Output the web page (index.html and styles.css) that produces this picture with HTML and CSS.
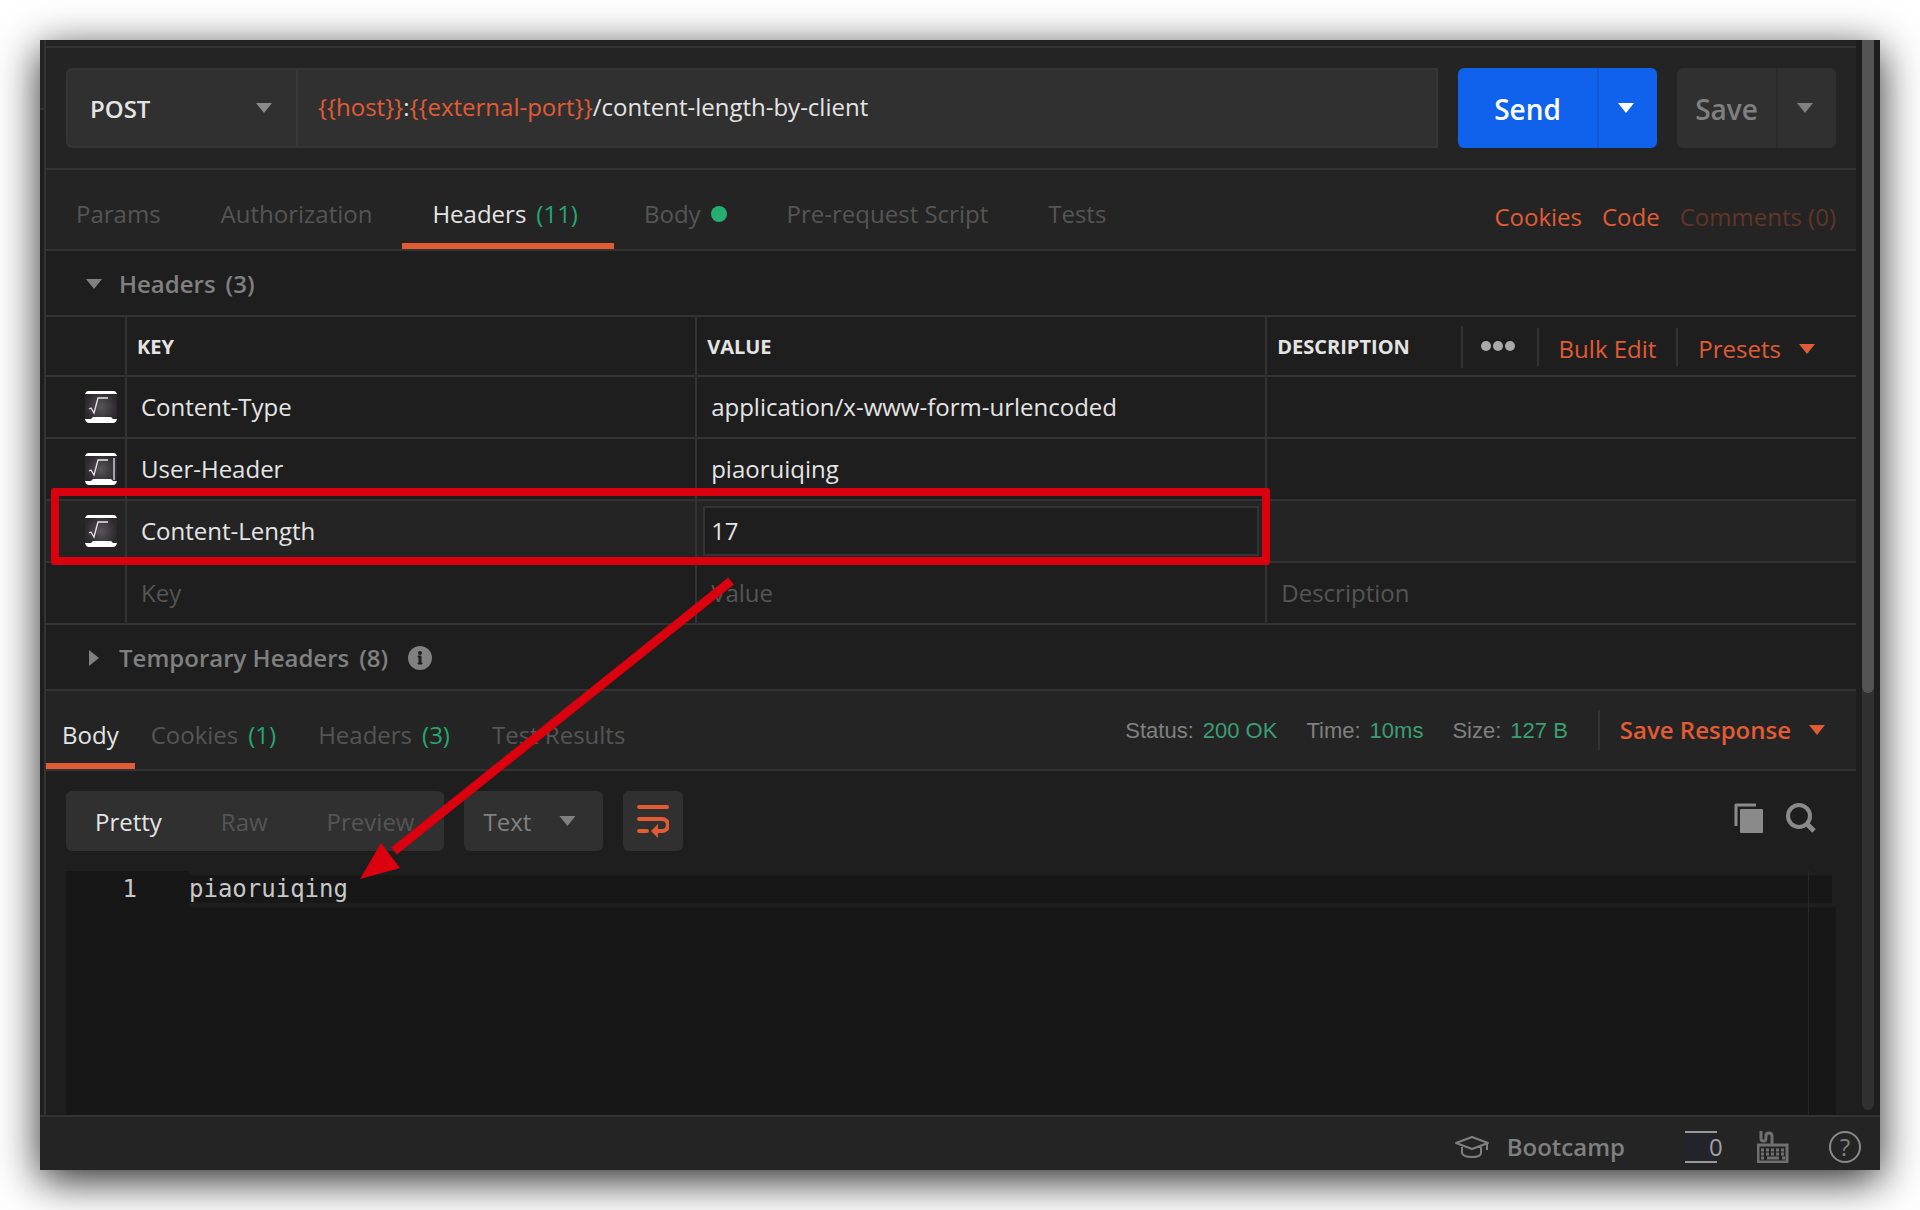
FILE: index.html
```
<!DOCTYPE html>
<html lang="en">
<head>
    <meta charset="UTF-8">
    <meta name="viewport" content="width=device-width, initial-scale=1.0">
    <title>content-length-by-client</title>
    <link rel="stylesheet" href="styles.css">
</head>
<body>
    <div class="app">
        <div class="workspace">
            <div class="sidebar-edge"></div>
            <main class="content">
                <form class="request-bar">
                    <div class="url-group">
                        <div class="method">
                            <select aria-label="Method">
                                <option>POST</option>
                                <option>GET</option>
                            </select>
                            <span class="caret"></span>
                        </div>
                        <div class="url" role="textbox" aria-label="Request URL" contenteditable="true" spellcheck="false"><span class="var">{{host}}</span>:<span class="var">{{external-port}}</span>/content-length-by-client</div>
                    </div>
                    <div class="split send">
                        <button type="button" class="main">Send</button>
                        <button type="button" class="more" aria-label="Send options"><span class="caret"></span></button>
                    </div>
                    <div class="split save">
                        <button type="button" class="main">Save</button>
                        <button type="button" class="more" aria-label="Save options"><span class="caret"></span></button>
                    </div>
                </form>

                <div class="request-tabs">
                    <nav class="tabs">
                        <button class="tab">Params</button>
                        <button class="tab">Authorization</button>
                        <button class="tab active">Headers <span class="count">(11)</span></button>
                        <button class="tab">Body <span class="dot"></span></button>
                        <button class="tab">Pre-request Script</button>
                        <button class="tab">Tests</button>
                    </nav>
                    <div class="request-links">
                        <a href="#">Cookies</a>
                        <a href="#">Code</a>
                        <a href="#" class="disabled">Comments (0)</a>
                    </div>
                </div>

                <button class="section-title">
                    <span class="caret"></span>
                    <span class="label">Headers <span>(3)</span></span>
                </button>

                <div class="table-wrap">
                    <table class="headers-table">
                        <colgroup>
                            <col class="col-check">
                            <col class="col-key">
                            <col class="col-value">
                            <col>
                        </colgroup>
                        <thead>
                            <tr>
                                <th></th>
                                <th>KEY</th>
                                <th>VALUE</th>
                                <th>
                                    <div class="th-tools">
                                        <span class="th-label">DESCRIPTION</span>
                                        <button class="dots" aria-label="Columns"><i></i><i></i><i></i></button>
                                        <button class="link bulk">Bulk Edit</button>
                                        <button class="link presets">Presets <span class="caret"></span></button>
                                    </div>
                                </th>
                            </tr>
                        </thead>
                        <tbody>
                            <tr>
                                <td class="check">
                                    <label>
                                        <input type="checkbox" checked aria-label="Enable Content-Type">
                                        <svg viewBox="0 0 32 32"><use href="#check"/></svg>
                                    </label>
                                </td>
                                <td><input type="text" aria-label="Key" value="Content-Type"></td>
                                <td><input type="text" aria-label="Value" value="application/x-www-form-urlencoded"></td>
                                <td></td>
                            </tr>
                            <tr>
                                <td class="check">
                                    <label>
                                        <input type="checkbox" checked aria-label="Enable User-Header">
                                        <svg viewBox="0 0 32 32"><use href="#check"/><path d="M29 5V27" stroke="#a8a2a9" stroke-width="2"/></svg>
                                    </label>
                                </td>
                                <td><input type="text" aria-label="Key" value="User-Header"></td>
                                <td><input type="text" aria-label="Value" value="piaoruiqing"></td>
                                <td></td>
                            </tr>
                            <tr class="selected">
                                <td class="check">
                                    <label>
                                        <input type="checkbox" checked aria-label="Enable Content-Length">
                                        <svg viewBox="0 0 32 32"><use href="#check"/></svg>
                                    </label>
                                </td>
                                <td><input type="text" aria-label="Key" value="Content-Length"></td>
                                <td><input type="text" class="focused" aria-label="Value" value="17"></td>
                                <td></td>
                            </tr>
                            <tr>
                                <td></td>
                                <td><input type="text" aria-label="Key" placeholder="Key"></td>
                                <td><input type="text" aria-label="Value" placeholder="Value"></td>
                                <td><input type="text" aria-label="Description" placeholder="Description"></td>
                            </tr>
                        </tbody>
                    </table>
                    <div class="mark-box"></div>
                    <svg class="mark-arrow" viewBox="0 0 380 310">
                        <path d="M375 9L38 279" stroke="#db000d" stroke-width="9" fill="none"/>
                        <path d="M4 307L25 271L44 296Z" fill="#db000d"/>
                    </svg>
                </div>

                <button class="section-title">
                    <span class="caret right"></span>
                    <span class="label">Temporary Headers <span>(8)</span></span>
                    <svg class="info" viewBox="0 0 24 24">
                        <circle cx="12" cy="12" r="12" fill="#808080"/>
                        <circle cx="12" cy="7" r="2" fill="#1e1e1e"/>
                        <path d="M10 10H13V17H14V18H10V17H11V11H10Z" fill="#1e1e1e" stroke="#1e1e1e"/>
                    </svg>
                </button>

                <div class="response-tabs">
                    <nav class="tabs">
                        <button class="tab active">Body</button>
                        <button class="tab">Cookies <span class="count">(1)</span></button>
                        <button class="tab">Headers <span class="count">(3)</span></button>
                        <button class="tab">Test Results</button>
                    </nav>
                    <div class="stats">
                        <span>Status: <b>200 OK</b></span>
                        <span>Time: <b>10ms</b></span>
                        <span>Size: <b>127 B</b></span>
                    </div>
                    <button class="link save-response">Save Response <span class="caret"></span></button>
                </div>

                <div class="toolbar">
                    <div class="view-modes">
                        <button class="active">Pretty</button>
                        <button>Raw</button>
                        <button>Preview</button>
                    </div>
                    <div class="format">
                        <select aria-label="Format">
                            <option>Text</option>
                            <option>JSON</option>
                        </select>
                        <span class="caret"></span>
                    </div>
                    <button class="wrap" aria-label="Wrap lines">
                        <svg viewBox="0 0 32 34" fill="none" stroke="#e15b35" stroke-width="4" stroke-linecap="round">
                            <path d="M2 3H30M2 15H25A6 6 0 0 1 25 27H21M2 27H10"/>
                            <path d="M14 27L21 20V34Z" fill="#e15b35" stroke="none"/>
                        </svg>
                    </button>
                    <div class="toolbar-icons">
                        <button aria-label="Copy">
                            <svg viewBox="0 0 30 30">
                                <path d="M2 23V2H22" fill="none" stroke="#8a8a8a" stroke-width="3" stroke-linejoin="round"/>
                                <rect x="6" y="6" width="23" height="24" rx="1" fill="#8a8a8a"/>
                            </svg>
                        </button>
                        <button aria-label="Search">
                            <svg viewBox="0 0 30 30" fill="none" stroke="#8a8a8a" stroke-width="4">
                                <circle cx="13" cy="13" r="11"/>
                                <path d="M21 21L28 28" stroke-width="5"/>
                            </svg>
                        </button>
                    </div>
                </div>

                <div class="editor">
                    <div class="gutter">1</div>
                    <div class="code"><div class="line">piaoruiqing</div></div>
                    <div class="ruler"></div>
                </div>
            </main>
            <div class="scroll">
                <div class="track"><div class="thumb"></div></div>
            </div>
        </div>

        <footer class="status-bar">
            <button class="bootcamp">
                <svg viewBox="0 0 34 22" fill="none" stroke="#808080" stroke-width="2" stroke-linejoin="round">
                    <path d="M1 7L17 1L33 7L17 13ZM7 9V17Q8 21 17 21Q26 21 26 17V9M32 7V14"/>
                </svg>
                Bootcamp
            </button>
            <button class="counter">0</button>
            <button aria-label="Shortcuts">
                <svg viewBox="0 0 32 32" fill="none" stroke="#707070">
                    <path d="M4 0V8Q4 10 7 10Q9 10 9 7V4Q9 2 12 2Q15 2 15 5V13" stroke-width="3"/>
                    <rect x="1" y="14" width="29" height="17" stroke-width="3"/>
                    <path d="M4 19H28M4 23H28" stroke-width="3" stroke-dasharray="3 2"/>
                    <path d="M4 27H7M10 27H22M25 27H28" stroke-width="3"/>
                </svg>
            </button>
            <button class="help" aria-label="Help">?</button>
        </footer>
    </div>

    <svg class="defs" width="0" height="0">
        <defs>
            <radialGradient id="glass">
                <stop offset="0" stop-color="#5a535b"/>
                <stop offset="1" stop-color="#2c292d"/>
            </radialGradient>
            <g id="check">
                <rect width="32" height="32" rx="3" fill="url(#glass)"/>
                <path d="M0 3Q1 0 3 0H29Q31 0 32 3Z" fill="#fff"/>
                <path d="M0 28H6L8 26H26L28 28H32Q31 32 28 32H4Q1 32 0 28Z" fill="#fff"/>
                <path d="M4 18L6 17L9 22L13 7H23" fill="none" stroke="#e8e4e8" stroke-width="1.3"/>
            </g>
        </defs>
    </svg>
</body>
</html>
```

FILE: styles.css
```
* {
    box-sizing: border-box;
}
body {
    margin: 0;
    padding: 40px;
    background: #fff;
    font-family: 'Open Sans', 'Noto Sans', sans-serif;
    font-size: 24px;
    line-height: 32px;
    color: #e4e4e4;
}
button, input, select {
    font: inherit;
    color: inherit;
    background: none;
    border: none;
    padding: 0;
    margin: 0;
    outline: none;
}
button {
    cursor: pointer;
}
select {
    appearance: none;
}
a {
    color: #e15b35;
    text-decoration: none;
}
svg {
    display: block;
}
.defs {
    position: absolute;
}
.app {
    position: relative;
    display: flex;
    flex-direction: column;
    min-height: calc(100vh - 80px);
    background: #1e1e1e;
    box-shadow: 0 10px 40px rgba(0, 0, 0, 0.85);
}
.workspace {
    flex: 1;
    display: flex;
}
.sidebar-edge {
    width: 6px;
    border-right: 2px solid #333;
}
.sidebar-edge::before {
    content: '';
    display: block;
    height: 68px;
    background: #242424;
    border-bottom: 2px solid #333;
}
.content {
    flex: 1;
    min-width: 0;
    display: flex;
    flex-direction: column;
    border-top: 6px solid #242424;
}
.caret {
    flex: none;
    display: inline-block;
    width: 16px;
    height: 10px;
    background: currentColor;
    clip-path: polygon(0 0, 100% 0, 50% 100%);
    pointer-events: none;
}
.caret.right {
    width: 10px;
    height: 16px;
    margin: 0 3px;
    clip-path: polygon(0 0, 100% 50%, 0 100%);
}
.link {
    color: #e15b35;
}

/* request line */
.request-bar {
    display: flex;
    gap: 20px;
    padding: 20px;
    background: #242424;
    border-top: 2px solid #333;
    border-bottom: 2px solid #333;
}
.url-group {
    flex: 1;
    display: flex;
    height: 80px;
    background: #303030;
    border: 2px solid #353535;
    border-radius: 6px 0 0 6px;
}
.method {
    display: flex;
    align-items: center;
    width: 230px;
    border-right: 2px solid #393939;
    color: #8a8a8a;
}
.method select {
    width: 100%;
    height: 100%;
    margin-right: -40px;
    padding: 2px 0 0 22px;
    font-weight: 600;
    color: #e4e4e4;
}
.url {
    flex: 1;
    padding: 21px 20px;
    outline: none;
}
.var {
    color: #e15b35;
}
.split {
    display: flex;
    height: 80px;
    border-radius: 6px;
    overflow: hidden;
    font-size: 28px;
    font-weight: 600;
}
.split .more {
    width: 60px;
    display: flex;
    align-items: center;
    justify-content: center;
    padding-right: 4px;
}
.send {
    width: 199px;
    background: #1062ec;
    color: #fff;
}
.split .main {
    flex: 1;
    padding-top: 2px;
}
.send .more {
    border-left: 2px solid #0e58d6;
}
.save {
    width: 159px;
    background: #303030;
    color: #808080;
}
.save .more {
    border-left: 2px solid #2a2a2a;
}

/* tabs */
.request-tabs {
    display: flex;
    justify-content: space-between;
    height: 81px;
    padding-right: 20px;
    background: #242424;
    border-bottom: 2px solid #333;
}
.tabs {
    display: flex;
}
.tab {
    display: flex;
    align-items: center;
    gap: 10px;
    padding: 15px 30px 0;
    color: #555;
    border-bottom: 6px solid transparent;
}
.tab.active {
    color: #e4e4e4;
    border-bottom-color: #e15b35;
}
.count {
    margin-right: 6px;
    color: #26a771;
}
.dot {
    width: 16px;
    height: 16px;
    border-radius: 50%;
    background: #26ad70;
}
.request-links {
    display: flex;
    align-items: center;
    gap: 20px;
    padding-top: 14px;
}
.request-links .disabled {
    color: #613528;
}
.section-title {
    display: flex;
    align-items: center;
    height: 66px;
    padding: 2px 0 0 40px;
    border-bottom: 2px solid #333;
    color: #808080;
    font-weight: 600;
}
.section-title .label {
    display: flex;
    gap: 10px;
    margin-left: 17px;
}
.info {
    width: 24px;
    height: 24px;
    margin-left: 20px;
}

/* headers table */
.table-wrap {
    position: relative;
}
.headers-table {
    width: 100%;
    table-layout: fixed;
    border-collapse: separate;
    border-spacing: 0;
}
.col-check {
    width: 81px;
}
.col-key, .col-value {
    width: 31.5%;
}
.headers-table th, .headers-table td {
    height: 62px;
    padding: 0 6px;
    border-bottom: 2px solid #333;
    border-right: 2px solid #333;
    text-align: left;
}
.headers-table th:last-child, .headers-table td:last-child {
    border-right: none;
}
.headers-table th {
    height: 60px;
    padding: 2px 10px 0;
    font-size: 20px;
    font-weight: 700;
}
.headers-table td input[type="text"] {
    display: block;
    width: 100%;
    height: 50px;
    padding: 0 6px 2px;
    border: 2px solid transparent;
}
.headers-table td input::placeholder {
    color: #555;
    opacity: 1;
}
.headers-table td input.focused {
    background: #1e1e1e;
    border-color: #333;
}
.selected {
    background: #242424;
}
.check label {
    position: relative;
    display: block;
    width: 32px;
    margin-left: 33px;
}
.check input {
    position: absolute;
    width: 32px;
    height: 32px;
    opacity: 0;
}
.th-tools {
    display: flex;
    align-items: center;
    padding-right: 31px;
}
.th-label {
    flex: 1;
}
.dots {
    display: flex;
    align-items: center;
    gap: 2px;
    height: 42px;
    padding: 0 22px 2px 18px;
    border-left: 2px solid #333;
}
.dots i {
    width: 10px;
    height: 10px;
    border-radius: 50%;
    background: #a8a8a8;
}
.th-tools .link {
    height: 38px;
    padding: 4px 0 0 20px;
    border-left: 2px solid #333;
    font-size: 24px;
    font-weight: 400;
}
.th-tools .bulk {
    padding-right: 20px;
}
.presets, .save-response {
    display: flex;
    align-items: center;
    gap: 18px;
}

/* callout over the edited row */
.mark-box {
    position: absolute;
    top: 171px;
    left: 5px;
    right: 586px;
    height: 77px;
    border: 8px solid #db000d;
    border-radius: 3px;
}
.mark-arrow {
    position: absolute;
    z-index: 1;
    top: 255px;
    left: 310px;
    width: 380px;
    height: 310px;
    pointer-events: none;
}

/* response */
.response-tabs {
    display: flex;
    align-items: center;
    height: 80px;
    padding-right: 31px;
    background: #242424;
    border-bottom: 2px solid #333;
}
.response-tabs .tabs {
    flex: 1;
    align-self: stretch;
}
.response-tabs .tab {
    padding: 16px 16px 0;
}
.response-tabs .count {
    margin-right: 10px;
}
.stats {
    display: flex;
    gap: 29px;
    padding-top: 2px;
    font-family: 'Liberation Sans', Arial, sans-serif;
    font-size: 22px;
    color: #808080;
}
.stats span {
    display: flex;
    gap: 9px;
}
.stats b {
    font-weight: 400;
    color: #3a9f73;
}
.save-response {
    height: 40px;
    margin-left: 30px;
    padding-left: 20px;
    border-left: 2px solid #333;
    font-weight: 600;
}
.toolbar {
    display: flex;
    gap: 20px;
    padding: 20px;
}
.view-modes, .format, .wrap {
    height: 60px;
    background: #303030;
    border-radius: 6px;
}
.view-modes {
    display: flex;
}
.view-modes button {
    padding: 2px 30px 0 29px;
    color: #555;
}
.view-modes .active {
    color: #e4e4e4;
}
.format {
    display: flex;
    align-items: center;
    width: 139px;
    color: #808080;
}
.format select {
    width: 100%;
    height: 100%;
    margin-right: -44px;
    padding: 2px 0 0 19px;
}
.wrap {
    width: 60px;
    padding: 0 14px;
}
.toolbar-icons {
    display: flex;
    align-items: center;
    gap: 22px;
    margin-left: auto;
    padding: 0 20px 6px 0;
}
.toolbar-icons svg {
    width: 30px;
    height: 30px;
}
.editor {
    flex: 1;
    display: flex;
    position: relative;
    min-height: 240px;
    margin: 0 20px;
    background: #171717;
    font-family: 'DejaVu Sans Mono', monospace;
    color: #c8c8c8;
}
.gutter {
    width: 123px;
    padding: 2px 52px 0 0;
    text-align: right;
}
.code {
    flex: 1;
}
.line {
    height: 36px;
    line-height: 28px;
    border: 4px solid #1e1e1e;
    border-left: none;
}
.ruler {
    position: absolute;
    top: 0;
    right: 0;
    bottom: 0;
    width: 28px;
    border-left: 1px solid #272727;
}
.scroll {
    display: flex;
    width: 24px;
    padding: 0 6px 5px;
}
.track {
    width: 12px;
    background: #303030;
    border-radius: 0 0 6px 6px;
}
.thumb {
    height: 61%;
    background: #545454;
    border-radius: 0 0 6px 6px;
}

/* footer */
.status-bar {
    display: flex;
    align-items: center;
    justify-content: flex-end;
    height: 55px;
    padding: 7px 19px 0 0;
    background: #242424;
    border-top: 2px solid #333;
    color: #808080;
}
.status-bar button {
    height: 32px;
    margin-left: 40px;
}
.bootcamp {
    display: flex;
    align-items: center;
    gap: 18px;
    font-weight: 600;
}
.bootcamp svg {
    width: 34px;
    height: 22px;
}
.status-bar svg {
    min-width: 32px;
}
.status-bar .counter {
    width: 32px;
    margin-left: 60px;
    border: solid #9a9a9a;
    border-width: 2px 0;
    background: #22242a;
    color: #a0a0a0;
    line-height: 28px;
    text-indent: 24px;
}
.status-bar .help {
    width: 32px;
    border: 2px solid #8a8a8a;
    border-radius: 50%;
    line-height: 28px;
}
```
